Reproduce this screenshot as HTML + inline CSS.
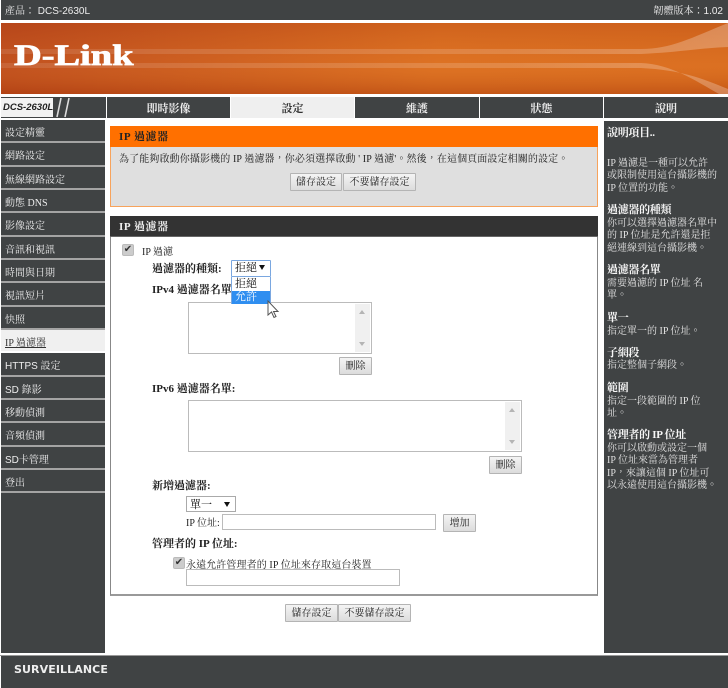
<!DOCTYPE html>
<html lang="zh-Hant"><head><meta charset="utf-8"><title>IP 過濾器</title>
<style>
html,body{margin:0;padding:0;background:#fff}
body{position:relative;width:728px;height:688px;overflow:hidden;font-family:"Liberation Serif","Noto Serif CJK SC",serif;font-size:10px;color:#222}
.a,.t{position:absolute}
.t{white-space:nowrap;line-height:14px}
.d{background:#404344}
.w{color:#eee}
.b{font-weight:bold;font-size:11px;color:#222}
.nav{position:absolute;left:1px;width:104px;height:21.3px;background:#404344;border-bottom:2px solid #a4a4a4;color:#eee;line-height:27px;text-indent:4px;font-size:10px;white-space:nowrap}
.nav.s{font-family:"Liberation Sans","Noto Serif CJK SC",sans-serif}
.tab{position:absolute;top:97px;height:21px;background:#404344;color:#eee;text-align:center;line-height:25px;font-weight:bold;font-size:11px}
.btn{position:absolute;box-sizing:border-box;background:linear-gradient(#f4f4f4,#dcdcdc);border:1px solid #b4b4b4;border-radius:1px;text-align:center;color:#222;line-height:18px;font-size:10px}
.in{position:absolute;box-sizing:border-box;background:#fff;border:1px solid #bbb}
.sb{position:absolute;top:1px;right:1px;bottom:1px;width:15px;background:#f0f0f0}
.up,.dn{position:absolute;left:4px;width:0;height:0;border-left:3.5px solid transparent;border-right:3.5px solid transparent}
.up{top:6px;border-bottom:4px solid #b4b4b4}
.dn{bottom:6px;border-top:4px solid #b4b4b4}
.chk{position:absolute;width:10px;height:10px;background:#ccc;border:1px solid #bbb;border-radius:2px;color:#333;font:bold 10px/10px "DejaVu Sans",sans-serif;text-align:center}
.arrow{position:absolute;width:0;height:0;border-left:3.5px solid transparent;border-right:3.5px solid transparent;border-top:5px solid #111}
.help{position:absolute;left:607px;color:#e2e2e2;line-height:12.4px;font-size:10px;white-space:nowrap}
.help b{color:#f6f6f6;display:block;font-size:11px;letter-spacing:-.3px;margin-bottom:1.5px}
</style></head><body>

<div class="a d" style="left:1px;top:0;width:727px;height:20px"></div>
<div class="t w" style="left:5px;top:5px;font-family:'Liberation Sans','Noto Serif CJK SC',sans-serif">產品： DCS-2630L</div>
<div class="t w" style="right:5px;top:5px;font-family:'Liberation Sans','Noto Serif CJK SC',sans-serif">韌體版本：1.02</div>

<svg class="a" style="left:1px;top:23px" width="727" height="71" viewBox="0 0 727 71">
<defs><linearGradient id="g" x1="0" x2="1" y1="0" y2="0"><stop offset="0" stop-color="#bb4a20"/><stop offset=".25" stop-color="#c95a22"/><stop offset=".6" stop-color="#dc7024"/><stop offset="1" stop-color="#d96d22"/></linearGradient>
<linearGradient id="v" x1="0" x2="0" y1="0" y2="1"><stop offset="0" stop-color="#a83808" stop-opacity=".25"/><stop offset=".6" stop-color="#e88020" stop-opacity=".15"/><stop offset="1" stop-color="#a83808" stop-opacity=".45"/></linearGradient>
<linearGradient id="s" x1="0" x2="1" y1="0" y2="0"><stop offset="0" stop-color="#fff" stop-opacity=".1"/><stop offset=".7" stop-color="#fff" stop-opacity=".16"/><stop offset="1" stop-color="#fff" stop-opacity=".26"/></linearGradient></defs>
<rect width="727" height="71" fill="url(#g)"/><rect width="727" height="71" fill="url(#v)"/>
<path d="M0 26H640C670 26 690 15 727 0V24C700 25 680 29 640 31H0Z" fill="url(#s)"/>
<path d="M0 40H640C670 41 695 58 718 71H727V66C700 55 680 47 640 45H0Z" fill="url(#s)"/>
</svg>
<div class="t" style="left:14px;top:41px;color:#fff;font:bold 30px/30px 'Liberation Serif',serif;-webkit-text-stroke:.8px #fff;transform:scaleX(1.28);transform-origin:0 0">D-Link</div>

<div class="a d" style="left:1px;top:97px;width:105px;height:21px"></div>
<div class="a" style="left:1px;top:98px;width:52px;height:19px;background:#f2f2f2"></div>
<div class="t" style="left:3px;top:101px;font:italic bold 9.5px/14px 'Liberation Sans',sans-serif;color:#222">DCS-2630L</div>
<svg class="a" style="left:53px;top:97px" width="20" height="21"><path d="M4 20L8 1M12 20L16 1" stroke="#ddd" stroke-width="1.6"/></svg>

<div class="tab" style="left:107px;width:123px">即時影像</div>
<div class="tab" style="left:231px;width:123px;background:#efefef;color:#333">設定</div>
<div class="tab" style="left:355px;width:124px">維護</div>
<div class="tab" style="left:480px;width:123px">狀態</div>
<div class="tab" style="left:604px;width:124px">說明</div>

<div class="a d" style="left:1px;top:120px;width:104px;height:533px"></div>
<div class="nav" style="top:120px">設定精靈</div>
<div class="nav" style="top:143.3px">網路設定</div>
<div class="nav" style="top:166.6px">無線網路設定</div>
<div class="nav" style="top:190px">動態 DNS</div>
<div class="nav" style="top:213.3px">影像設定</div>
<div class="nav" style="top:236.6px">音訊和視訊</div>
<div class="nav" style="top:260px">時間與日期</div>
<div class="nav" style="top:283.3px">視訊短片</div>
<div class="nav" style="top:306.6px">快照</div>
<div class="nav" style="top:330px;background:#f0f0f0;color:#333;border-bottom-color:#fff"><span style="text-decoration:underline">IP 過濾器</span></div>
<div class="nav s" style="top:353.3px">HTTPS 設定</div>
<div class="nav s" style="top:376.6px">SD 錄影</div>
<div class="nav" style="top:400px">移動偵測</div>
<div class="nav" style="top:423.3px">音頻偵測</div>
<div class="nav s" style="top:446.6px">SD卡管理</div>
<div class="nav" style="top:470px">登出</div>

<div class="a" style="left:110px;top:126px;width:488px;height:81px;background:#dfdfdf;box-sizing:border-box;border:1px solid #f7a35c"></div>
<div class="a" style="left:110px;top:126px;width:488px;height:21px;background:#ff7000"></div>
<div class="t b" style="left:119px;top:130px;letter-spacing:.6px">IP 過濾器</div>
<div class="t" style="left:119px;top:153px;letter-spacing:.12px">為了能夠啟動你攝影機的 IP 過濾器，你必須選擇啟動 ' IP 過濾'。然後，在這個頁面設定相關的設定。</div>
<div class="btn" style="left:290px;top:173px;width:52px;height:18px">儲存設定</div>
<div class="btn" style="left:343px;top:173px;width:73px;height:18px">不要儲存設定</div>

<div class="a" style="left:110px;top:216px;width:488px;height:380px;box-sizing:border-box;border:1px solid #888;border-bottom:2px solid #999;background:#fff"></div>
<div class="a" style="left:110px;top:216px;width:488px;height:21px;background:#333;border-bottom:1px solid #666;box-sizing:border-box"></div>
<div class="t b" style="left:119px;top:220px;color:#eee;letter-spacing:.6px">IP 過濾器</div>

<div class="chk" style="left:122px;top:244px">✔</div>
<div class="t" style="left:142px;top:246px">IP 過濾</div>

<div class="t b" style="left:152px;top:262px">過濾器的種類:</div>
<div class="t b" style="left:152px;top:283px">IPv4 過濾器名單:</div>

<div class="in" style="left:188px;top:302px;width:184px;height:52px"><div class="sb"><i class="up"></i><i class="dn"></i></div></div>
<div class="btn" style="left:339px;top:357px;width:33px;height:18px">刪除</div>

<div class="a" style="left:231px;top:260px;width:38px;height:15px;border:1px solid #7aa7e0;background:#fff;border-radius:1px"></div>
<div class="t" style="left:235px;top:261px;color:#111;font-size:11px">拒絕</div>
<div class="arrow" style="left:259px;top:265px"></div>
<div class="a" style="left:231px;top:277px;width:38px;height:26px;background:#fff;border:1px solid #7aa7e0;border-top:0"></div>
<div class="a" style="left:232px;top:290.5px;width:38px;height:13px;background:#2f8ef0"></div>
<div class="t" style="left:235px;top:277px;color:#111;font-size:11px">拒絕</div>
<div class="t" style="left:235px;top:290px;color:#fff;font-size:11px">允許</div>
<svg class="a" style="left:266px;top:300px" width="14" height="19"><path d="M2 1V15L5.5 12L8 17.5L10 16.5L7.5 11.5H12Z" fill="#fff" stroke="#555" stroke-width="1"/></svg>

<div class="t b" style="left:152px;top:382px">IPv6 過濾器名單:</div>
<div class="in" style="left:188px;top:400px;width:334px;height:52px"><div class="sb"><i class="up"></i><i class="dn"></i></div></div>
<div class="btn" style="left:489px;top:456px;width:33px;height:18px">刪除</div>

<div class="t b" style="left:152px;top:479px">新增過濾器:</div>
<div class="in" style="left:186px;top:496px;width:50px;height:16px;border-color:#aaa"></div>
<div class="t" style="left:190px;top:498px;color:#111;font-size:11px">單一</div>
<div class="arrow" style="left:224px;top:502px"></div>
<div class="t" style="left:186px;top:517px">IP 位址:</div>
<div class="in" style="left:222px;top:514px;width:214px;height:16px"></div>
<div class="btn" style="left:443px;top:514px;width:33px;height:18px">增加</div>

<div class="t b" style="left:152px;top:537px">管理者的 IP 位址:</div>
<div class="chk" style="left:173px;top:557px">✔</div>
<div class="t" style="left:186px;top:559px;letter-spacing:.1px">永遠允許管理者的 IP 位址來存取這台裝置</div>
<div class="in" style="left:186px;top:569px;width:214px;height:17px"></div>

<div class="btn" style="left:285px;top:604px;width:53px;height:18px">儲存設定</div>
<div class="btn" style="left:338px;top:604px;width:73px;height:18px">不要儲存設定</div>

<div class="a d" style="left:604px;top:121px;width:124px;height:532px"></div>
<div class="help" style="top:127px"><b>說明項目..</b></div>
<div class="help" style="top:158px">IP 過濾是一種可以允許<br>或限制使用這台攝影機的<br>IP 位置的功能。</div>
<div class="help" style="top:204px"><b>過濾器的種類</b>你可以選擇過濾器名單中<br>的 IP 位址是允許還是拒<br>絕連線到這台攝影機。</div>
<div class="help" style="top:264px"><b>過濾器名單</b>需要過濾的 IP 位址 名<br>單。</div>
<div class="help" style="top:312px"><b>單一</b>指定單一的 IP 位址。</div>
<div class="help" style="top:346.5px"><b>子網段</b>指定整個子網段。</div>
<div class="help" style="top:382px"><b>範圍</b>指定一段範圍的 IP 位<br>址。</div>
<div class="help" style="top:429px"><b>管理者的 IP 位址</b>你可以啟動或設定一個<br>IP 位址來當為管理者<br>IP，來讓這個 IP 位址可<br>以永遠使用這台攝影機。</div>

<div class="a" style="left:0;top:655px;width:728px;height:1px;background:#999"></div>
<div class="a d" style="left:1px;top:656px;width:727px;height:32px"></div>
<div class="t" style="left:14px;top:663px;color:#eee;font:bold 11px/14px 'DejaVu Sans',sans-serif;letter-spacing:.1px">SURVEILLANCE</div>
</body></html>
